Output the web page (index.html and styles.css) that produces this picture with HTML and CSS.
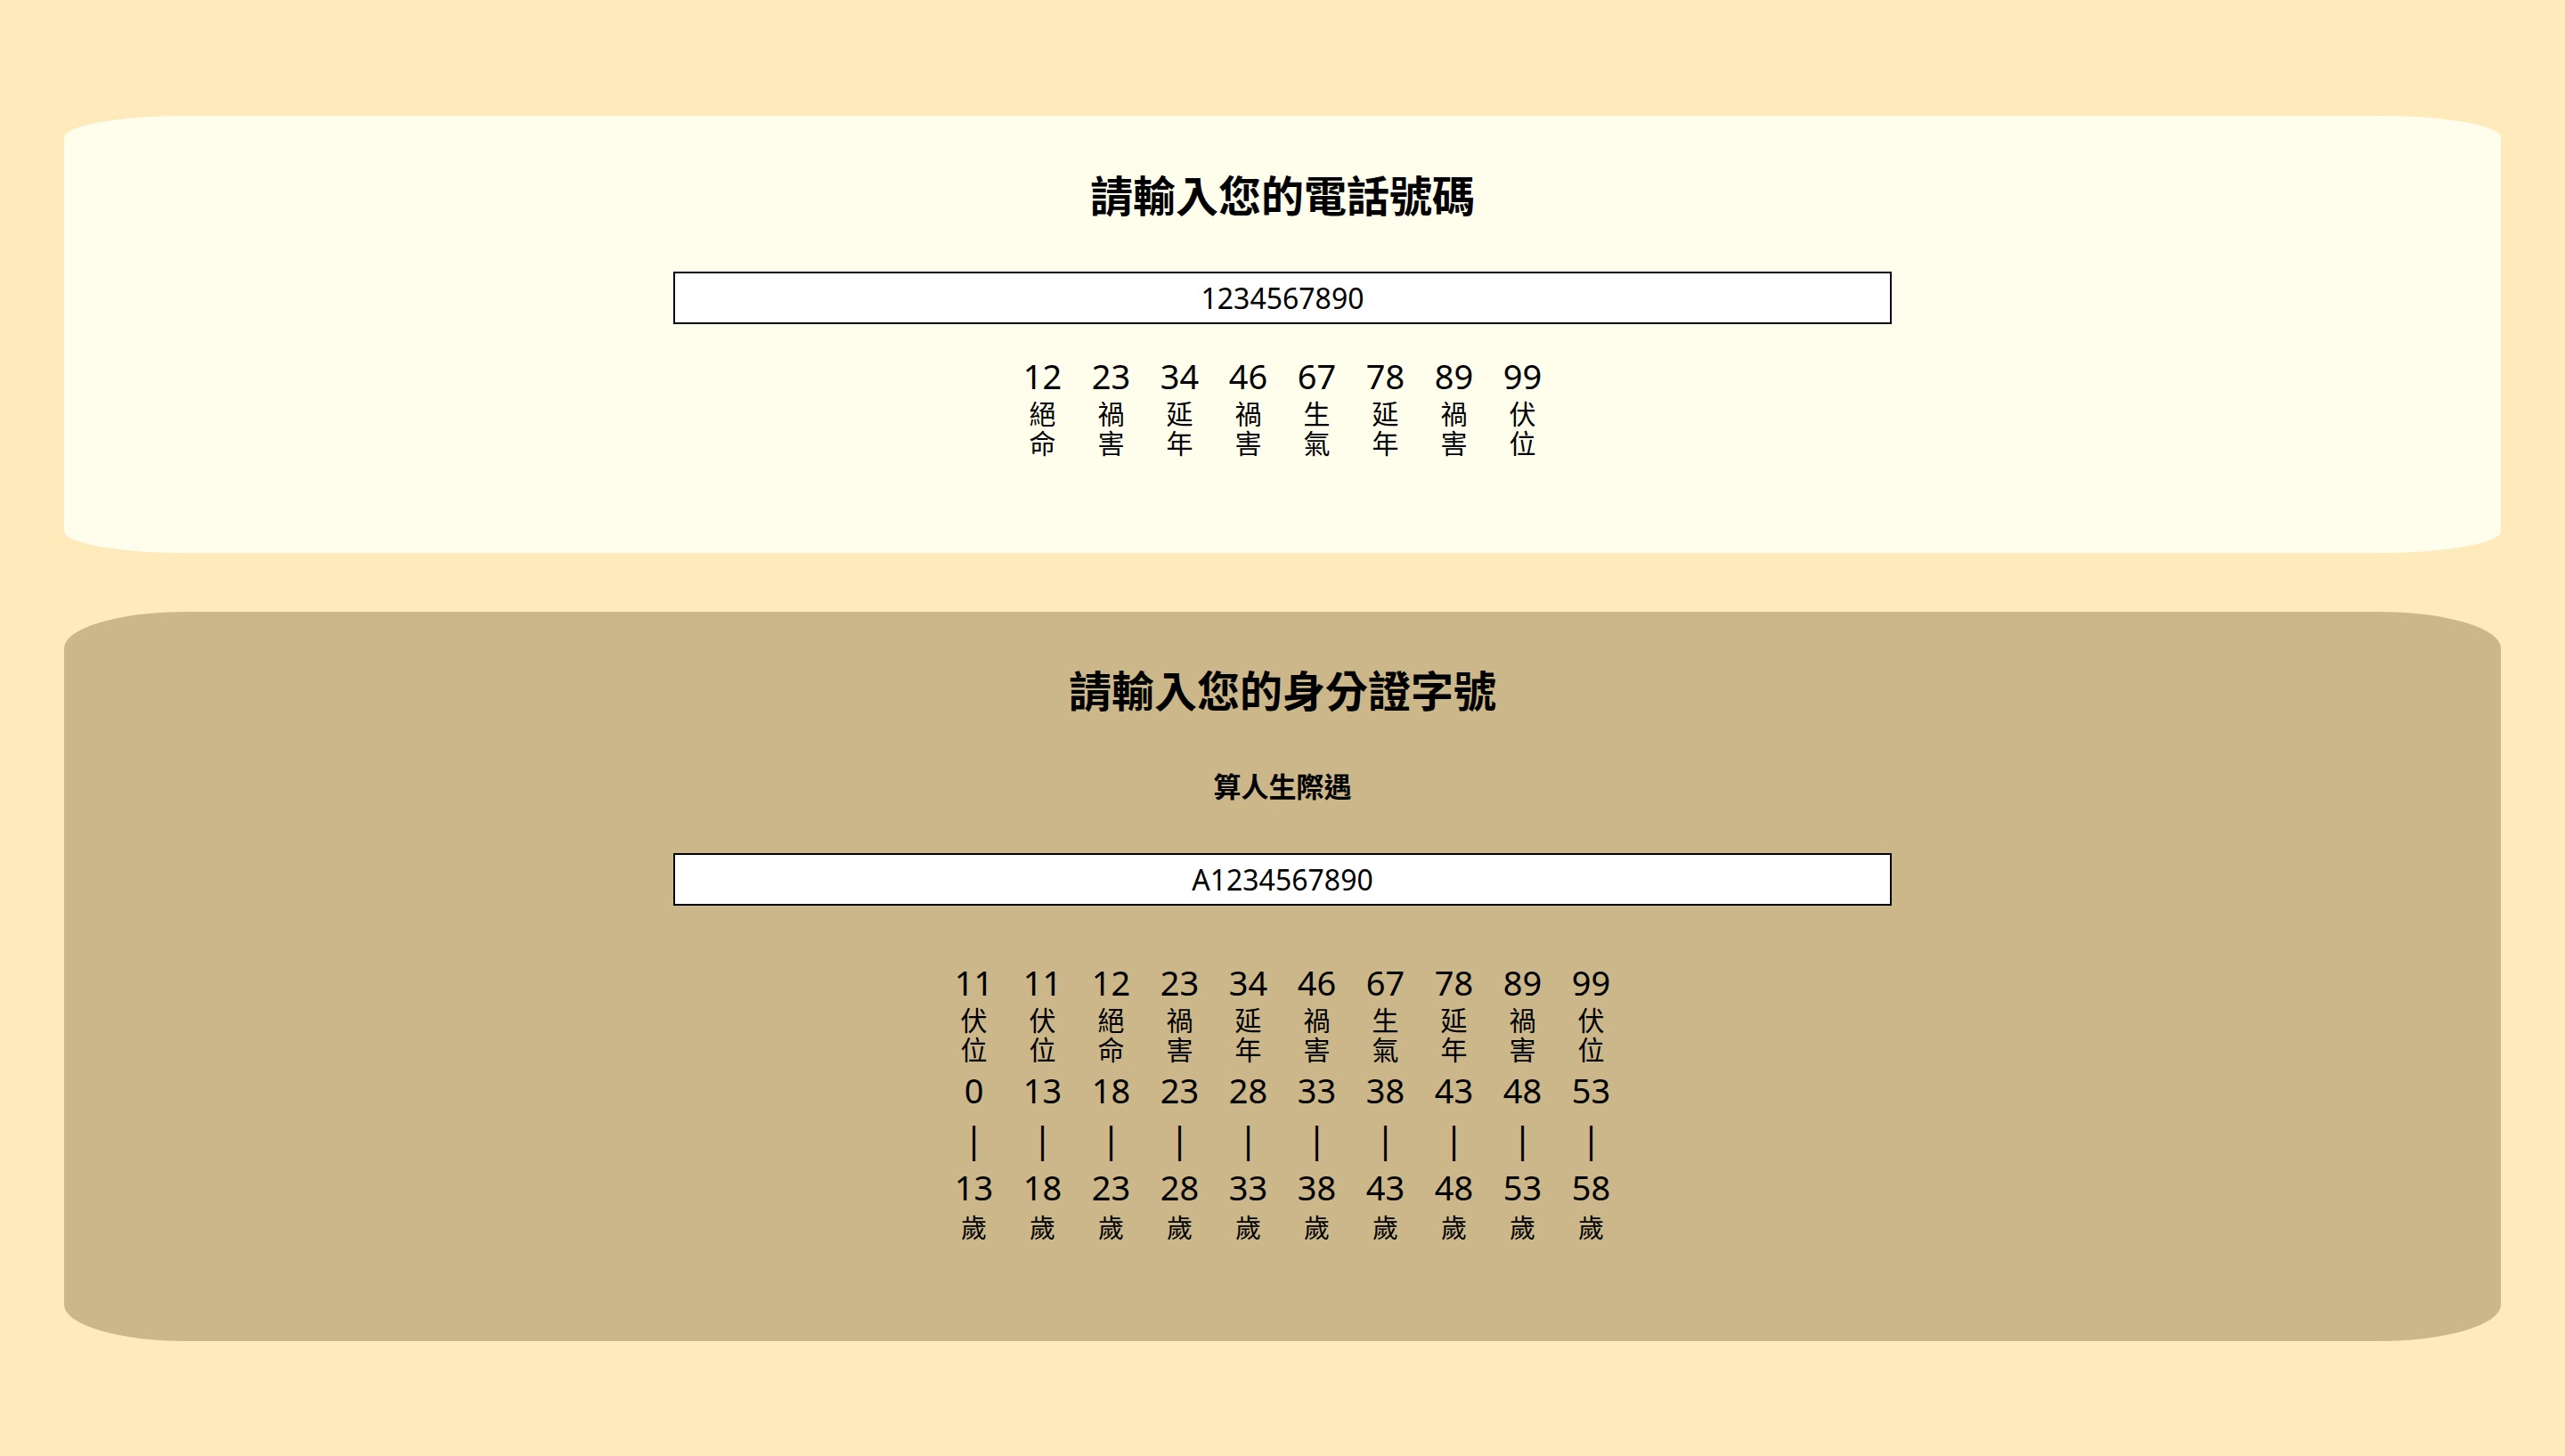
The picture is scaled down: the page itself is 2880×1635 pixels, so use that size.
FILE: index.html
```html
<!DOCTYPE html>
<html lang="zh-Hant">
<head>
<meta charset="utf-8">
<title>號碼吉凶</title>
<link rel="stylesheet" href="styles.css">
</head>
<body>
<main class="page">
  <section class="card card-phone">
    <h2 class="card-title">請輸入您的電話號碼</h2>
    <input class="num-input" type="text" value="1234567890">
    <div class="pairs">
      <div class="pair"><div class="pair-num">12</div><div class="pair-label">絕命</div></div>
      <div class="pair"><div class="pair-num">23</div><div class="pair-label">禍害</div></div>
      <div class="pair"><div class="pair-num">34</div><div class="pair-label">延年</div></div>
      <div class="pair"><div class="pair-num">46</div><div class="pair-label">禍害</div></div>
      <div class="pair"><div class="pair-num">67</div><div class="pair-label">生氣</div></div>
      <div class="pair"><div class="pair-num">78</div><div class="pair-label">延年</div></div>
      <div class="pair"><div class="pair-num">89</div><div class="pair-label">禍害</div></div>
      <div class="pair"><div class="pair-num">99</div><div class="pair-label">伏位</div></div>
    </div>
  </section>

  <section class="card card-id">
    <h2 class="card-title">請輸入您的身分證字號</h2>
    <h3 class="card-sub">算人生際遇</h3>
    <input class="num-input id-input" type="text" value="A1234567890">
    <div class="pairs pairs-id">
      <div class="pair"><div class="pair-num">11</div><div class="pair-label">伏位</div><div class="age">0</div><div class="bar">|</div><div class="age-end">13</div><div class="sui">歲</div></div>
      <div class="pair"><div class="pair-num">11</div><div class="pair-label">伏位</div><div class="age">13</div><div class="bar">|</div><div class="age-end">18</div><div class="sui">歲</div></div>
      <div class="pair"><div class="pair-num">12</div><div class="pair-label">絕命</div><div class="age">18</div><div class="bar">|</div><div class="age-end">23</div><div class="sui">歲</div></div>
      <div class="pair"><div class="pair-num">23</div><div class="pair-label">禍害</div><div class="age">23</div><div class="bar">|</div><div class="age-end">28</div><div class="sui">歲</div></div>
      <div class="pair"><div class="pair-num">34</div><div class="pair-label">延年</div><div class="age">28</div><div class="bar">|</div><div class="age-end">33</div><div class="sui">歲</div></div>
      <div class="pair"><div class="pair-num">46</div><div class="pair-label">禍害</div><div class="age">33</div><div class="bar">|</div><div class="age-end">38</div><div class="sui">歲</div></div>
      <div class="pair"><div class="pair-num">67</div><div class="pair-label">生氣</div><div class="age">38</div><div class="bar">|</div><div class="age-end">43</div><div class="sui">歲</div></div>
      <div class="pair"><div class="pair-num">78</div><div class="pair-label">延年</div><div class="age">43</div><div class="bar">|</div><div class="age-end">48</div><div class="sui">歲</div></div>
      <div class="pair"><div class="pair-num">89</div><div class="pair-label">禍害</div><div class="age">48</div><div class="bar">|</div><div class="age-end">53</div><div class="sui">歲</div></div>
      <div class="pair"><div class="pair-num">99</div><div class="pair-label">伏位</div><div class="age">53</div><div class="bar">|</div><div class="age-end">58</div><div class="sui">歲</div></div>
    </div>
  </section>
</main>
</body>
</html>
```

FILE: styles.css
```css
html, body {
  margin: 0;
  padding: 0;
}
body {
  background: #ffeabb;
  color: #000;
  font-family: "Noto Sans", "Noto Sans CJK TC", sans-serif;
}
.page {
  padding: 130px 72px 131px;
  display: flex;
  flex-direction: column;
  gap: 66px;
}
.card {
  border-radius: 5%;
  display: flex;
  flex-direction: column;
  align-items: center;
  padding: 55px 0 108px;
}
.card-phone {
  background: #fffeec;
}
.card-id {
  background: #cbb78a;
  padding-top: 54px;
  padding-bottom: 112px;
}
.card-title {
  margin: 0;
  font-family: "Noto Sans CJK TC", sans-serif;
  font-size: 48px;
  font-weight: 700;
  line-height: 64px;
}
.card-sub {
  margin: 57px 0 0;
  font-family: "Noto Sans CJK TC", sans-serif;
  font-size: 31px;
  font-weight: 700;
  line-height: 40px;
}
.num-input {
  box-sizing: border-box;
  width: 50%;
  height: 59px;
  margin: 56px 0 0;
  border: 2px solid #000;
  background: #fff;
  padding: 0;
  text-align: center;
  font-family: "Noto Sans", "Noto Sans CJK TC", sans-serif;
  font-size: 32px;
  color: #000;
  outline: none;
}
.id-input {
  margin-top: 56px;
}
.pairs {
  display: flex;
  gap: 31px;
  margin-top: 36px;
}
.pairs-id {
  margin-top: 64px;
}
.pair {
  width: 46px;
  display: flex;
  flex-direction: column;
  align-items: center;
  text-align: center;
}
.pair-num, .age, .age-end {
  font-size: 38px;
  line-height: 44px;
}
.pair-label {
  font-family: "Noto Sans CJK TC", sans-serif;
  font-size: 30px;
  line-height: 33px;
  width: 32px;
  margin-top: 3px;
}
.age {
  margin-top: 8px;
}
.bar {
  margin-top: 11px;
  font-size: 40px;
  line-height: 44px;
  font-weight: 400;
}
.age-end {
  margin-top: 10px;
}
.sui {
  font-family: "Noto Sans CJK TC", sans-serif;
  font-size: 29px;
  line-height: 33px;
  margin-top: 6px;
}
```
